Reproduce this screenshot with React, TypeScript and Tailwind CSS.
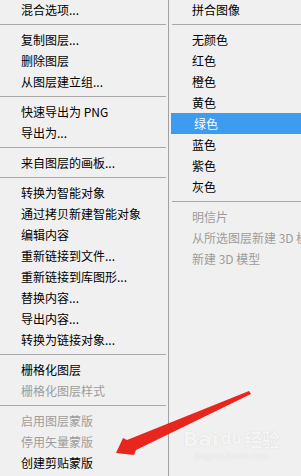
import React from "react";

type Item = { label: string; disabled?: boolean; active?: boolean } | "sep";

const leftItems: Item[] = [
  { label: "混合选项..." },
  "sep",
  { label: "复制图层..." },
  { label: "删除图层" },
  { label: "从图层建立组..." },
  "sep",
  { label: "快速导出为 PNG" },
  { label: "导出为..." },
  "sep",
  { label: "来自图层的画板..." },
  "sep",
  { label: "转换为智能对象" },
  { label: "通过拷贝新建智能对象" },
  { label: "编辑内容" },
  { label: "重新链接到文件..." },
  { label: "重新链接到库图形..." },
  { label: "替换内容..." },
  { label: "导出内容..." },
  { label: "转换为链接对象..." },
  "sep",
  { label: "栅格化图层" },
  { label: "栅格化图层样式", disabled: true },
  "sep",
  { label: "启用图层蒙版", disabled: true },
  { label: "停用矢量蒙版", disabled: true },
  { label: "创建剪贴蒙版" },
];

const rightItems: Item[] = [
  { label: "拼合图像" },
  "sep",
  { label: "无颜色" },
  { label: "红色" },
  { label: "橙色" },
  { label: "黄色" },
  { label: "绿色", active: true },
  { label: "蓝色" },
  { label: "紫色" },
  { label: "灰色" },
  "sep",
  { label: "明信片", disabled: true },
  { label: "从所选图层新建 3D 模型", disabled: true },
  { label: "新建 3D 模型", disabled: true },
];

const Menu = ({ items, side }: { items: Item[]; side: "left" | "right" }) => {
  return (
    <div className="flex flex-col">
      {items.map((it, i) => {
        if (it === "sep") {
          return (
            <div key={i} className="h-[9px] pt-[4px]">
              <div
                className={
                  side === "left"
                    ? "h-px bg-[#a9a9a9] mr-[2px]"
                    : "h-px bg-[#a9a9a9] ml-[3px]"
                }
              />
            </div>
          );
        }
        const first = i === 0;
        let cls = "whitespace-nowrap text-[12px] ";
        cls += first ? "h-[20px] leading-[20px] " : "h-[21px] leading-[21px] ";
        cls += side === "left" ? "pl-[21px] " : "pl-[23px] ";
        if (it.active) cls += "bg-[#3d9cf0] text-white ml-[2px] pl-[21px]";
        else if (it.disabled) cls += "text-[#9d9d9d]";
        else cls += "text-black";
        return (
          <div key={i} className={cls}>
            {it.label}
          </div>
        );
      })}
    </div>
  );
};

export default function App() {
  return (
    <div
      className="relative w-[301px] h-[476px] bg-[#f0f0f0] flex overflow-hidden"
      style={{ fontFamily: '"Noto Sans CJK SC", "Noto Sans", sans-serif' }}
    >
      <div className="w-[168px] shrink-0">
        <Menu items={leftItems} side="left" />
      </div>
      <div className="w-px shrink-0 bg-[#a0a0a0]" />
      <div className="flex-1 min-w-0 overflow-hidden">
        <Menu items={rightItems} side="right" />
      </div>

      {/* baidu watermark */}
      <div className="absolute left-[183px] top-[428px] flex flex-col items-center text-white/80 [text-shadow:0_0_1px_#c8c8c8]">
        <div className="flex items-center text-[20px] font-bold leading-[22px]" style={{ fontFamily: '"DejaVu Sans", sans-serif' }}>
          <span>Bai</span>
          <span className="text-[15px] mx-[2px]">du</span>
          <span className="text-[18px]" style={{ fontFamily: '"Noto Sans CJK SC", sans-serif' }}>经验</span>
        </div>
        <div className="text-[10px] leading-[12px]" style={{ fontFamily: '"Liberation Serif", serif' }}>
          jingyan.baidu.com
        </div>
      </div>

      {/* red arrow */}
      <svg className="absolute left-0 top-0" width="301" height="476" viewBox="0 0 301 476">
        <polygon
          points="116,453 123,438 127,440 249,391 251,394 136,450 134,455"
          fill="#e8261e"
        />
      </svg>
    </div>
  );
}
